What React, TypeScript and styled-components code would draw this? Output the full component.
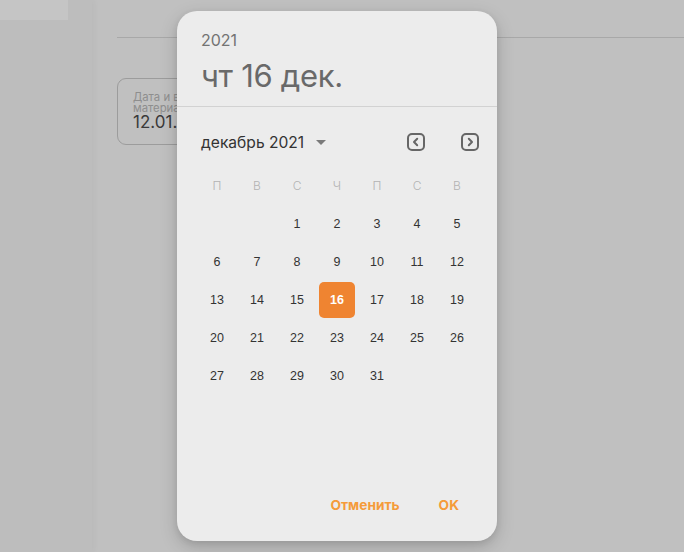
import React from "react";
import styled, { createGlobalStyle } from "styled-components";

const Global = createGlobalStyle`
  html, body { margin: 0; padding: 0; }
  body { width: 684px; height: 552px; overflow: hidden; background: #c0c0c0; font-family: Inter, "Noto Sans", sans-serif; }
`;

const Page = styled.div`
  position: relative;
  display: flex;
  width: 684px;
  height: 552px;
  background: #c0c0c0;
`;

const Sidebar = styled.div`
  width: 92px;
  flex-shrink: 0;
  background: #bdbdbd;
  box-shadow: 2px 0 6px rgba(0, 0, 0, 0.04);
`;

const SideTop = styled.div`
  width: 68px;
  height: 20px;
  background: #c5c5c5;
`;

const Main = styled.div`
  flex: 1;
  display: flex;
  flex-direction: column;
  padding-left: 25px;
`;

const TopBar = styled.div`
  height: 37px;
  border-bottom: 1px solid #a8a8a8;
`;

const Field = styled.div`
  margin-top: 40px;
  width: 230px;
  height: 67px;
  box-sizing: border-box;
  border: 1px solid #9c9c9c;
  border-radius: 9px;
  padding: 13px 0 0 15px;
  display: flex;
  flex-direction: column;
`;

const FieldLabel = styled.div`
  font-size: 11.3px;
  line-height: 11px;
  color: #8e8e8e;
  width: 110px;
`;

const FieldValue = styled.div`
  font-size: 17px;
  line-height: 18px;
  color: #3a3a3a;
  margin-top: -1px;
`;

const Dialog = styled.div`
  position: absolute;
  left: 177px;
  top: 11px;
  width: 320px;
  height: 530px;
  background: #ececec;
  border-radius: 20px;
  box-shadow: 0 6px 18px rgba(0, 0, 0, 0.18), 0 2px 6px rgba(0, 0, 0, 0.08);
  display: flex;
  flex-direction: column;
  overflow: hidden;
`;

const Header = styled.div`
  padding: 19px 24px 0 24px;
  height: 96px;
  box-sizing: border-box;
  border-bottom: 1px solid #d2d2d2;
  display: flex;
  flex-direction: column;
`;

const Year = styled.div`
  font-size: 16px;
  line-height: 20px;
  color: #737373;
`;

const BigDate = styled.div`
  font-size: 31px;
  line-height: 40px;
  color: #696969;
  margin-top: 6px;
  letter-spacing: -0.3px;
`;

const MonthRow = styled.div`
  display: flex;
  align-items: center;
  height: 36px;
  margin-top: 17px;
  padding: 0 18px 0 24px;
`;

const MonthLabel = styled.div`
  font-size: 15.6px;
  color: #333;
  display: flex;
  align-items: center;
  gap: 12px;
  flex: 1;
`;

const Caret = styled.span`
  width: 0;
  height: 0;
  border-left: 5px solid transparent;
  border-right: 5px solid transparent;
  border-top: 5px solid #7a7a7a;
  margin-top: 1px;
`;

const NavGroup = styled.div`
  display: flex;
  gap: 36px;
`;

const NavButton = styled.button`
  width: 18px;
  height: 18px;
  padding: 0;
  border: none;
  background: none;
  display: flex;
`;

const Grid = styled.div`
  display: grid;
  grid-template-columns: repeat(7, 40px);
  grid-template-rows: 39px;
  grid-auto-rows: 38px;
  padding: 0 20px;
  margin-top: 6px;
`;

const WeekDay = styled.div`
  display: flex;
  align-items: center;
  justify-content: center;
  font-family: Inter, "Noto Sans", sans-serif;
  font-weight: 300;
  font-size: 12px;
  text-transform: uppercase;
  color: #b3b3b3;
`;

const Day = styled.div<{ $selected?: boolean }>`
  display: flex;
  align-items: center;
  justify-content: center;
  align-self: center;
  justify-self: center;
  width: 36px;
  height: 36px;
  border-radius: 5px;
  font-family: "Liberation Sans", Arial, sans-serif;
  font-size: 12.5px;
  color: ${(p) => (p.$selected ? "#ffffff" : "#333333")};
  font-weight: ${(p) => (p.$selected ? 700 : 400)};
  background: ${(p) => (p.$selected ? "#ef8431" : "transparent")};
`;

const Footer = styled.div`
  margin-top: auto;
  display: flex;
  justify-content: flex-end;
  align-items: center;
  gap: 39px;
  padding: 0 38px 28px 0;
  height: 16px;
`;

const TextButton = styled.button`
  border: none;
  background: none;
  padding: 0;
  font-family: Inter, "Noto Sans", sans-serif;
  font-weight: 700;
  font-size: 13.7px;
  color: #f59b3a;
`;

const Arrow = ({ dir }: { dir: "left" | "right" }) => (
  <svg width="18" height="18" viewBox="0 0 18 18" fill="none">
    <rect x="1" y="1" width="16" height="16" rx="4" stroke="#666" strokeWidth="2" />
    {dir === "left" ? (
      <path d="M10.2 5.8 L7 9 L10.2 12.2" stroke="#666" strokeWidth="2" strokeLinecap="round" strokeLinejoin="round" />
    ) : (
      <path d="M7.8 5.8 L11 9 L7.8 12.2" stroke="#666" strokeWidth="2" strokeLinecap="round" strokeLinejoin="round" />
    )}
  </svg>
);

const weekDays = ["п", "в", "с", "ч", "п", "с", "в"];

export default function App() {
  const cells: (number | null)[] = [null, null];
  for (let d = 1; d <= 31; d++) cells.push(d);
  return (
    <>
      <Global />
      <Page>
        <Sidebar>
          <SideTop />
        </Sidebar>
        <Main>
          <TopBar />
          <Field>
            <FieldLabel>Дата и время материала</FieldLabel>
            <FieldValue>12.01.2022</FieldValue>
          </Field>
        </Main>
        <Dialog>
          <Header>
            <Year>2021</Year>
            <BigDate>чт 16 дек.</BigDate>
          </Header>
          <MonthRow>
            <MonthLabel>
              декабрь 2021 <Caret />
            </MonthLabel>
            <NavGroup>
              <NavButton>
                <Arrow dir="left" />
              </NavButton>
              <NavButton>
                <Arrow dir="right" />
              </NavButton>
            </NavGroup>
          </MonthRow>
          <Grid>
            {weekDays.map((w, i) => (
              <WeekDay key={"w" + i}>{w}</WeekDay>
            ))}
            {cells.map((d, i) => (
              <Day key={i} $selected={d === 16}>
                {d ?? ""}
              </Day>
            ))}
          </Grid>
          <Footer>
            <TextButton>Отменить</TextButton>
            <TextButton>OK</TextButton>
          </Footer>
        </Dialog>
      </Page>
    </>
  );
}
